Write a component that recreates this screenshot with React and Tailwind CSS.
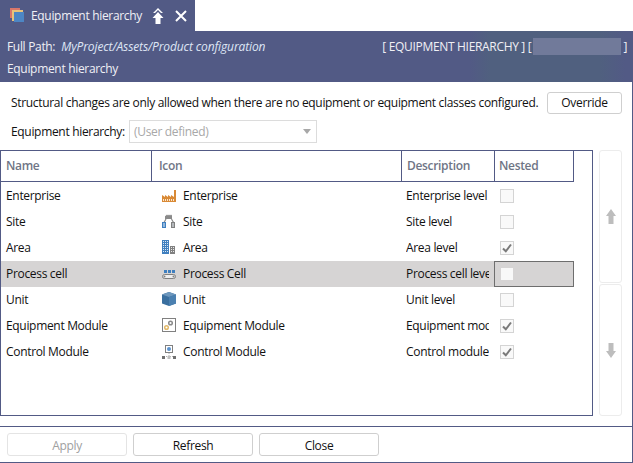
const rows = [
  { name: "Enterprise", icon: "enterprise", label: "Enterprise", desc: "Enterprise level", nested: false },
  { name: "Site", icon: "site", label: "Site", desc: "Site level", nested: false },
  { name: "Area", icon: "area", label: "Area", desc: "Area level", nested: true },
  { name: "Process cell", icon: "cell", label: "Process Cell", desc: "Process cell level", nested: false, selected: true },
  { name: "Unit", icon: "unit", label: "Unit", desc: "Unit level", nested: false },
  { name: "Equipment Module", icon: "equipment", label: "Equipment Module", desc: "Equipment module level", nested: true },
  { name: "Control Module", icon: "control", label: "Control Module", desc: "Control module level", nested: true },
];

function RowIcon({ type }) {
  return (
    <svg width="16" height="16" viewBox="0 0 16 16" className="shrink-0">
      {type === "enterprise" && (
        <>
          <path d="M1 14V7l3 2V7l3 2V7l3 2V7l3 2V2h2v12z" fill="#d98a36" />
          <path d="M2.5 11v2M4.5 11v2M6.5 11v2M8.5 11v2M10.5 11v2M12.5 11v2" stroke="#fbe6cc" strokeWidth="1" />
        </>
      )}
      {type === "site" && (
        <>
          <path d="M4 5V1.5l1 .8V0.5l1 1 1-1 1 1 1-1 1 1 1-1V5z" fill="#8a8a8a" />
          <path d="M5 5L3 8.5M10.5 5l2 3.5" stroke="#8a8a8a" strokeWidth="1.2" fill="none" />
          <rect x="1" y="8" width="4" height="6" fill="#3f7fbf" />
          <rect x="10" y="8" width="4" height="6" fill="#808080" />
          <path d="M2 10h2M2 12h2M11 10h2M11 12h2" stroke="#e8f0f8" />
        </>
      )}
      {type === "area" && (
        <>
          <rect x="1" y="0" width="7" height="14" fill="#3f7fbf" />
          <rect x="9" y="6" width="5" height="8" fill="#808080" />
          <path d="M2.5 1v11M4.5 1v11M6.5 1v11" stroke="#dbe8f4" strokeDasharray="1 1" />
          <path d="M10.5 7v6M12.5 7v6" stroke="#e8e8e8" strokeDasharray="1 1" />
        </>
      )}
      {type === "cell" && (
        <>
          <rect x="3" y="4" width="3" height="3" fill="#3f7fbf" />
          <rect x="7" y="4" width="3" height="3" fill="#3f7fbf" />
          <rect x="11" y="4" width="3" height="3" fill="#3f7fbf" />
          <rect x="1.5" y="8.5" width="13" height="4" rx="2" fill="#eee" stroke="#808080" />
          <circle cx="3.5" cy="10.5" r="1" fill="#808080" />
          <circle cx="12.5" cy="10.5" r="1" fill="#808080" />
        </>
      )}
      {type === "unit" && (
        <>
          <path d="M8 0l7 2.5v9L8 14l-7-2.5v-9z" fill="#3a6f9f" />
          <path d="M8 0l7 2.5L8 5 1 2.5z" fill="#6d97bd" />
          <path d="M8 5l7-2.5v9L8 14z" fill="#4b80b0" />
        </>
      )}
      {type === "equipment" && (
        <>
          <rect x="1.5" y="0.5" width="13" height="13" fill="#fff" stroke="#808080" strokeWidth="1" />
          <circle cx="9.5" cy="5" r="1.8" fill="none" stroke="#8a8a8a" strokeWidth="1.5" />
          <circle cx="5.5" cy="9.5" r="1.8" fill="none" stroke="#e2b96a" strokeWidth="1.5" />
        </>
      )}
      {type === "control" && (
        <>
          <rect x="4.5" y="1.5" width="7" height="7" fill="#fff" stroke="#808080" />
          <circle cx="8" cy="5" r="2" fill="#5b93cf" />
          <path d="M8 9v4M3 12.5h10" stroke="#b0b0b0" strokeDasharray="1 1" />
          <rect x="1" y="12" width="3" height="3" fill="#707070" />
          <rect x="6.5" y="12" width="3" height="3" fill="#c0c0c0" />
          <rect x="12" y="12" width="3" height="3" fill="#707070" />
        </>
      )}
    </svg>
  );
}

function Check({ on, selected }) {
  if (selected) return <div className="w-[12px] h-[12px] bg-[#f8f8f8]" />;
  return (
    <div className="w-[14px] h-[14px] border border-[#d4d4d4] bg-[#f9f9f9] flex items-center justify-center">
      {on && (
        <svg width="10" height="10" viewBox="0 0 10 10">
          <path d="M1 5.5L3.8 8.3 9 1.5" fill="none" stroke="#7a7a7a" strokeWidth="2" />
        </svg>
      )}
    </div>
  );
}

function Button({ children, disabled, className }) {
  return (
    <button
      className={`rounded-[3px] border text-[12px] bg-white ${
        disabled ? "border-[#e4e4e4] text-[#a0a0a0]" : "border-[#cfcfcf] text-[#111]"
      } ${className}`}
    >
      {children}
    </button>
  );
}

export default function App() {
  return (
    <div className="w-[633px] h-[463px] bg-white flex flex-col text-[12px] text-[#111] font-['Open_Sans',sans-serif] tracking-[-0.32px] overflow-hidden">
      {/* tab */}
      <div className="h-[31px] w-[195px] bg-[#525a85] flex items-center pl-[10px] text-[#f0f0f5] shrink-0">
        <svg width="15" height="15" viewBox="0 0 15 15" className="shrink-0">
          <rect x="0" y="0" width="10" height="10" fill="#d9776a" />
          <rect x="2" y="2" width="11" height="11" fill="#e8c27a" />
          <rect x="4" y="4" width="10" height="10" fill="#4d86c4" />
        </svg>
        <span className="ml-[6px]">Equipment hierarchy</span>
        <svg width="12" height="16" viewBox="0 0 12 16" className="ml-[10px] shrink-0">
          <path d="M6 0L11 5H9L6 2 3 5H1z M6 4L11.5 10H8.5V16H3.5V10H.5z" fill="#fff" />
        </svg>
        <svg width="12" height="12" viewBox="0 0 12 12" className="ml-[11px] shrink-0">
          <path d="M1 1l10 10M11 1L1 11" stroke="#fff" strokeWidth="2" />
        </svg>
      </div>

      {/* header */}
      <div className="h-[51px] bg-[linear-gradient(to_right,#525a85_470px,#50607f_490px,#50607f_600px,#525a85_625px)] text-[#f0f0f5] pl-[7px] pr-[6px] flex flex-col shrink-0">
        <div className="h-[31px] flex items-center">
          <span>Full Path:</span>
          <span className="italic text-[#dfe6f5] ml-[6px] tracking-[-0.12px]">MyProject/Assets/Product configuration</span>
          <span className="ml-auto">[ EQUIPMENT HIERARCHY ] [</span>
          <span className="w-[88px] h-[17px] bg-[#717a9a] ml-[2px] mr-[2px]" />
          <span>]</span>
        </div>
        <div className="leading-[14px]">Equipment hierarchy</div>
      </div>

      {/* body */}
      <div className="flex-1 flex flex-col border-r border-[#525a85] min-h-0">
        <div className="h-[38px] pt-[10px] pb-[6px] flex items-center pl-[11px] pr-[10px] shrink-0">
          <span>Structural changes are only allowed when there are no equipment or equipment classes configured.</span>
          <Button className="ml-auto w-[75px] h-[22px]">Override</Button>
        </div>
        <div className="h-[23px] flex items-center pl-[11px] shrink-0">
          <span className="w-[118px]">Equipment hierarchy:</span>
          <div className="w-[188px] h-[23px] border border-[#dcdcdc] flex items-center justify-between pl-[4px] pr-[5px] text-[#a8a8a8]">
            <span>(User defined)</span>
            <div className="w-0 h-0 border-x-[4px] border-x-transparent border-t-[5px] border-t-[#a8a8a8]" />
          </div>
        </div>

        <div className="flex mt-[7px] h-[266px]">
          {/* table */}
          <div className="w-[593px] h-[266px] border border-[#525a85] shrink-0">
            <div className="grid grid-cols-[150px_250px_93px_80px] h-[31px] font-semibold text-[#6f7585]">
              <div className="flex items-center pl-[5px] border-b border-[#525a85]">Name</div>
              <div className="flex items-center pl-[7px] border-b border-l border-[#525a85]">Icon</div>
              <div className="flex items-center pl-[5px] border-b border-l border-[#525a85]">Description</div>
              <div className="flex items-center pl-[4px] border-b border-x border-[#525a85]">Nested</div>
            </div>
            <div className="pt-[1px]">
              {rows.map((r) => (
                <div
                  key={r.name}
                  className={`grid grid-cols-[150px_250px_93px_80px] w-[573px] h-[26px] items-center ${r.selected ? "bg-[#d6d4d4]" : ""}`}
                >
                  <div className="pl-[5px]">{r.name}</div>
                  <div className="pl-[10px] flex items-center gap-[6px]">
                    <RowIcon type={r.icon} />
                    <span>{r.label}</span>
                  </div>
                  <div className="pl-[5px]">
                    <div className="w-[83px] overflow-hidden whitespace-nowrap">{r.desc}</div>
                  </div>
                  <div className={`h-full flex items-center pl-[6px] ${r.selected ? "border border-[#6e6e6e]" : ""}`}>
                    <Check on={r.nested} selected={r.selected} />
                  </div>
                </div>
              ))}
            </div>
          </div>

          {/* move buttons */}
          <div className="ml-[6px] w-[23px] flex flex-col gap-[1px]">
            <div className="h-[133px] rounded-[3px] border border-[#ececec] flex items-center justify-center">
              <svg width="10" height="15" viewBox="0 0 10 15">
                <path d="M5 0l5 7H7.5v8h-5V7H0z" fill="#bdbdbd" />
              </svg>
            </div>
            <div className="h-[132px] rounded-[3px] border border-[#ececec] flex items-center justify-center">
              <svg width="10" height="15" viewBox="0 0 10 15">
                <path d="M5 15l5-7H7.5V0h-5v8H0z" fill="#bdbdbd" />
              </svg>
            </div>
          </div>
        </div>

        {/* footer */}
        <div className="mt-auto h-[37px] border-t border-b border-[#525a85] flex items-center pl-[7px] gap-[6px] shrink-0">
          <Button disabled className="w-[120px] h-[23px] pt-[2px]">Apply</Button>
          <Button className="w-[120px] h-[23px] pt-[2px]">Refresh</Button>
          <Button className="w-[120px] h-[23px] pt-[2px]">Close</Button>
        </div>
      </div>
    </div>
  );
}
